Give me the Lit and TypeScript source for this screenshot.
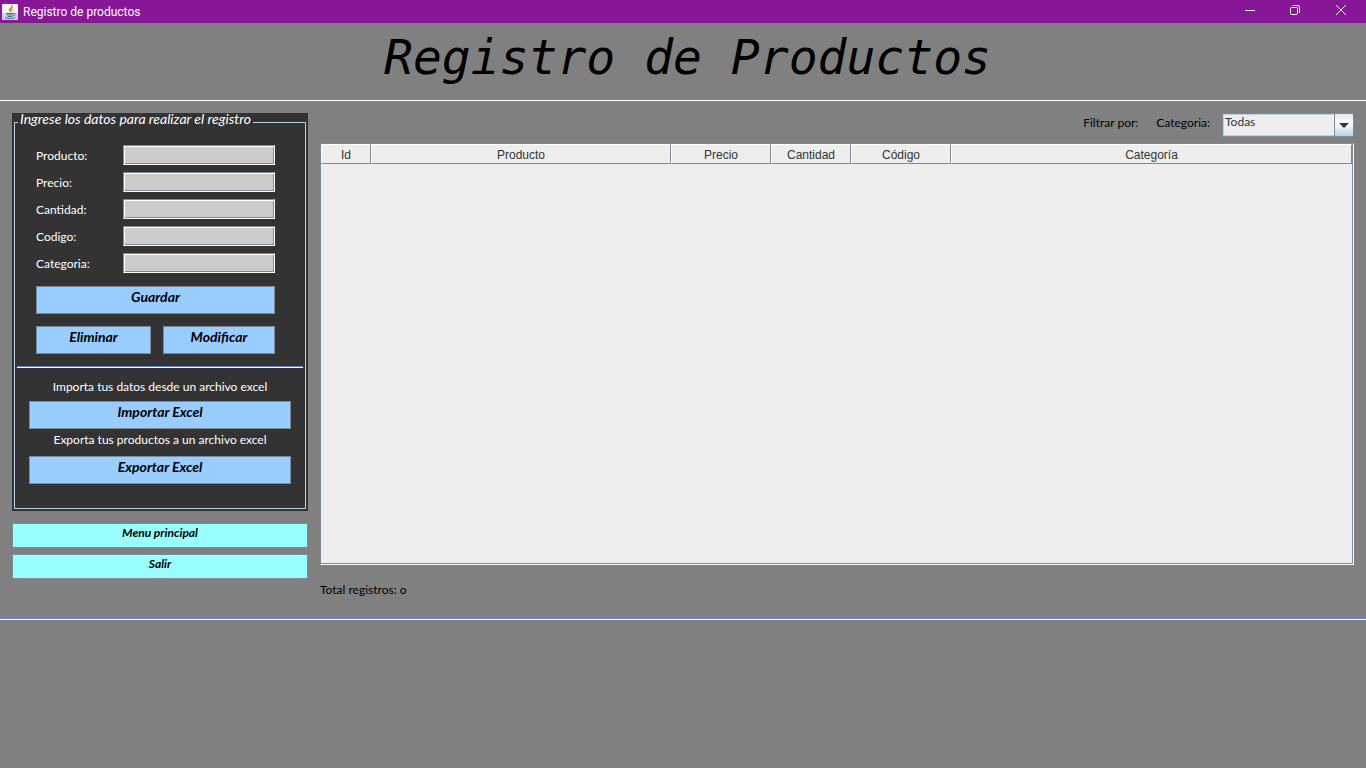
import { LitElement, html, css, svg } from "lit";
import { customElement, property } from "lit/decorators.js";

const FIELDS = ["Producto", "Precio", "Cantidad", "Codigo", "Categoria"];

const COLUMNS = [
  { label: "Id", width: 50 },
  { label: "Producto", width: 300 },
  { label: "Precio", width: 100 },
  { label: "Cantidad", width: 80 },
  { label: "Código", width: 100 },
  { label: "Categoría", width: 0 },
];

const javaCup = svg`
  <rect x="0" y="0" width="16" height="16" rx="1" fill="#f4f7f8"/>
  <path d="M0 9h16v6a1 1 0 0 1-1 1H1a1 1 0 0 1-1-1z" fill="#c9d8e0"/>
  <path d="M9.800 1c1 2.200-3 3-2.700 5 .1.900.9 1.500 1.300 2.200-.2-1.400-.2-1.900.6-2.900.8-1 2-2.300.8-4.300z" fill="#e8762c" stroke="#e8762c" stroke-width=".7"/>
  <path d="M11.200 4c-1.600.8-2.300 1.600-1.700 2.600.4.700.3 1.100-.2 1.800 1.300-.7 1.600-1.400 1-2.300-.4-.7 0-1.300.9-2.100z" fill="#e8762c"/>
  <path d="M4 9.500h7.500M4.800 11h6M5.600 12.500h4.400" stroke="#3d6f91" stroke-width="1.200" fill="none"/>
  <path d="M11.500 9.200c2.300-.5 2.500 1.700-.4 2.600" stroke="#3d6f91" stroke-width="1" fill="none"/>
  <path d="M3 13.500c1.500 1.300 8 1.300 10.300-.1" stroke="#3d6f91" stroke-width="1" fill="none"/>
`;

@customElement("window-bar")
class WindowBar extends LitElement {
  @property() caption = "";

  static styles = css`
    :host {
      display: flex;
      align-items: center;
      height: 23px;
      padding: 0 2px;
      box-sizing: border-box;
      background: #881798;
      color: #fff;
      font: 12px/16px Roboto, "Noto Sans", sans-serif;
    }
    .icon { width: 16px; height: 16px; margin-right: 5px; }
    .caption { flex: 1; }
    .control {
      display: flex;
      justify-content: center;
      width: 46px;
      height: 23px;
      padding: 4px 0;
      border: 0;
      background: none;
      color: inherit;
    }
    .control:hover { background: #a03cae; }
    .glyph { width: 12px; height: 12px; fill: none; stroke: currentColor; }
  `;

  render() {
    return html`
      <svg class="icon" viewBox="0 0 16 16" aria-hidden="true">${javaCup}</svg>
      <span class="caption">${this.caption}</span>
      <button class="control" aria-label="Minimizar">
        <svg class="glyph" viewBox="0 0 12 12"><path d="M2 6.500h10"/></svg>
      </button>
      <button class="control" aria-label="Restaurar">
        <svg class="glyph" viewBox="0 0 12 12">
          <rect x="1.500" y="3.500" width="7" height="7" rx="1"/>
          <path d="M3.500 1.500H9a1.500 1.500 0 0 1 1.500 1.500v5.500"/>
        </svg>
      </button>
      <button class="control" aria-label="Cerrar">
        <svg class="glyph" viewBox="0 0 12 12"><path d="M1 1l10 10M11 1L1 11"/></svg>
      </button>
    `;
  }
}

@customElement("register-form")
class RegisterForm extends LitElement {
  static styles = css`
    :host { display: block; font: 12px/16px Lato, "Open Sans", sans-serif; }
    .panel { padding: 1px 2px 2px; background: #333; color: #fff; }
    .frame {
      margin: 0;
      padding: 0 2px 24px;
      border: 1px solid #b8cfe5;
      min-width: 0;
    }
    .title {
      margin-left: 1px;
      padding: 0 2px 6px;
      font-size: 14px;
      line-height: 10px;
      font-style: italic;
    }
    .fields {
      display: grid;
      grid-template-columns: 87px 1fr;
      row-gap: 7px;
      align-items: center;
      padding: 15px 28px 13px 19px;
    }
    .label { padding-top: 2px; line-height: 18px; }
    .input {
      box-sizing: border-box;
      width: 100%;
      height: 20px;
      padding: 0 3px;
      border: 1px solid #fff;
      border-top-color: #7a8a99;
      border-left-color: #7a8a99;
      border-radius: 0;
      outline: 0;
      background: #ccc;
      box-shadow: inset 1px 1px #fff, inset -1px -1px #7a8a99;
      font: inherit;
    }
    .button {
      display: block;
      box-sizing: border-box;
      width: 100%;
      height: 28px;
      padding: 0 0 6px;
      border: 1px solid #7a8a99;
      border-radius: 0;
      background: #9cf;
      color: #000;
      font: italic bold 14px/16px Lato, "Open Sans", sans-serif;
    }
    .button:active { background: #b8cfe5; }
    .actions {
      display: grid;
      grid-template-columns: 115fr 112fr;
      gap: 12px;
      padding: 0 28px 12px 19px;
    }
    .wide { grid-column: 1 / -1; }
    .rule { height: 1px; margin: 0; border: 0; border-top: 1px solid #6382bf; background: #fff; }
    .excel { padding: 11px 12px 0; text-align: center; }
    .hint { margin: 0; padding-bottom: 6px; }
    .hint.second { padding: 3px 0 8px; }
    .nav { display: grid; gap: 6px; margin-top: 12px; }
    .button.aqua { height: 25px; padding-bottom: 5px; background: #9ff; font-size: 12px; }
  `;

  render() {
    return html`
      <div class="panel">
        <fieldset class="frame">
          <legend class="title">Ingrese los datos para realizar el registro</legend>
          <div class="fields">
            ${FIELDS.map(
              (name) => html`
                <label class="label" for=${name}>${name}:</label>
                <input class="input" id=${name} type="text" />
              `
            )}
          </div>
          <div class="actions">
            <button class="button wide">Guardar</button>
            <button class="button">Eliminar</button>
            <button class="button">Modificar</button>
          </div>
          <hr class="rule" />
          <div class="excel">
            <p class="hint">Importa tus datos desde un archivo excel</p>
            <button class="button">Importar Excel</button>
            <p class="hint second">Exporta tus productos a un archivo excel</p>
            <button class="button">Exportar Excel</button>
          </div>
        </fieldset>
      </div>
      <nav class="nav">
        <button class="button aqua">Menu principal</button>
        <button class="button aqua">Salir</button>
      </nav>
    `;
  }
}

@customElement("product-list")
class ProductList extends LitElement {
  @property() total = "o";

  static styles = css`
    :host {
      display: flex;
      flex-direction: column;
      color: #000;
      font: 12px/16px Lato, "Open Sans", sans-serif;
    }
    .filter { display: flex; justify-content: flex-end; align-items: center; margin-bottom: 6px; }
    .filter-title { margin-right: 18px; padding-bottom: 4px; }
    .filter-label { margin-right: 12px; padding-bottom: 4px; }
    .combo { position: relative; display: flex; width: 132px; height: 24px; }
    .select {
      appearance: none;
      box-sizing: border-box;
      width: 100%;
      padding: 0 20px 6px 2px;
      border: 1px solid #7a8a99;
      border-radius: 0;
      outline: 0;
      background: #eee;
      color: #333;
      box-shadow: inset 1px 1px #b8cfe5, inset -1px -1px #b8cfe5;
      font: 12px/16px Lato, "Open Sans", sans-serif;
    }
    .arrow {
      position: absolute;
      inset: 1px 1px 1px auto;
      display: flex;
      align-items: center;
      justify-content: center;
      width: 18px;
      border-left: 1px solid #7a8a99;
      background: linear-gradient(#dde8f3, #fff 40%, #b8cfe5);
      pointer-events: none;
    }
    .triangle { width: 10px; height: 5px; fill: #333; }
    .scroll {
      flex: 1;
      border: 1px solid #fff;
      border-top-color: #7a8a99;
      border-left-color: #7a8a99;
      box-shadow: inset -1px -1px #7a8a99;
      background: #eee;
      padding-right: 1px;
    }
    .table { width: 100%; border-collapse: separate; border-spacing: 0; table-layout: fixed; }
    .head {
      box-sizing: border-box;
      height: 20px;
      padding: 1px 0 0;
      border: 1px solid #7a8a99;
      border-top-color: #fff;
      border-left-color: #fff;
      color: #333;
      font: 12px/16px "Liberation Sans", Arial, sans-serif;
      text-align: center;
    }
    .total { margin: 0; padding: 17px 0 20px; }
  `;

  render() {
    return html`
      <div class="filter">
        <span class="filter-title">Filtrar por:</span>
        <label class="filter-label" for="category">Categoria:</label>
        <span class="combo">
          <select class="select" id="category"><option>Todas</option></select>
          <span class="arrow">
            <svg class="triangle" viewBox="0 0 10 5"><path d="M0 0h10L5 5z"/></svg>
          </span>
        </span>
      </div>
      <div class="scroll">
        <table class="table">
          <colgroup>
            ${COLUMNS.map((c) => html`<col style=${c.width ? `width:${c.width}px` : ""} />`)}
          </colgroup>
          <thead>
            <tr>${COLUMNS.map((c) => html`<th class="head" scope="col">${c.label}</th>`)}</tr>
          </thead>
          <tbody></tbody>
        </table>
      </div>
      <p class="total">Total registros: ${this.total}</p>
    `;
  }
}

@customElement("app-root")
class AppRoot extends LitElement {
  static styles = css`
    :host { display: block; min-height: 100vh; background: #808080; }
    .heading {
      margin: 0;
      padding: 6px 0 14px 9px;
      color: #000;
      font: italic 48px/56px "DejaVu Sans Mono", monospace;
      text-align: center;
    }
    .rule { height: 1px; margin: 0; border: 0; border-top: 1px solid #6382bf; background: #fff; }
    .content {
      display: grid;
      grid-template-columns: 296px 1fr;
      grid-template-rows: minmax(505px, auto);
      column-gap: 12px;
      padding: 12px 12px 0;
    }
  `;

  render() {
    return html`
      <window-bar caption="Registro de productos"></window-bar>
      <h1 class="heading">Registro de Productos</h1>
      <hr class="rule" />
      <main class="content">
        <register-form></register-form>
        <product-list></product-list>
      </main>
      <hr class="rule" />
    `;
  }
}
